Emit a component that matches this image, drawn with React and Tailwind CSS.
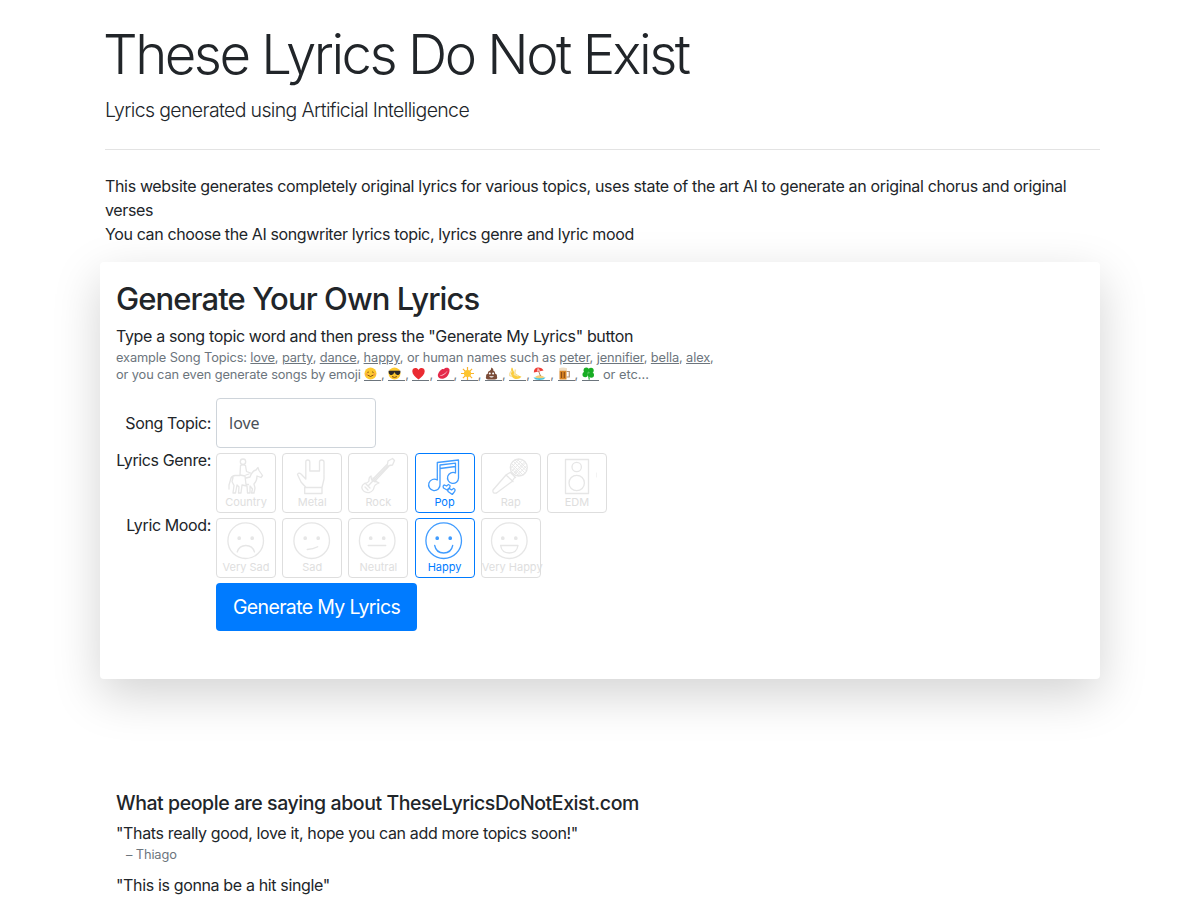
import React from 'react';
import { clsx } from 'clsx';

const EMOJIS = [
  {
    name: 'smile',
    art: (
      <>
        <circle cx="6.5" cy="6.5" r="6" fill="#fdc92f" />
        <path d="M3.3 5.5q.8-1.3 1.6 0M8 5.5q.8-1.3 1.6 0M3.5 8q3 3 6 0" fill="none" stroke="#7a4510" strokeWidth=".9" />
        <circle cx="2.6" cy="7.4" r="1.1" fill="#f79a4b" />
        <circle cx="10.4" cy="7.4" r="1.1" fill="#f79a4b" />
      </>
    ),
  },
  {
    name: 'cool',
    art: (
      <>
        <circle cx="6.5" cy="6.5" r="6" fill="#fdc92f" />
        <path d="M.6 3.8h11.8v1.4q-.5 2.8-3 2.8-2 0-2.6-2.4h-.6Q5.6 8 3.6 8 1.1 8 .6 5.2z" fill="#2c2a28" />
        <path d="M4 9.6q2.5 1.6 5 0" fill="none" stroke="#7a4510" />
      </>
    ),
  },
  {
    name: 'heart',
    art: <path d="M6.5 12.5C3 10 .3 7.4.3 4.3.3.5 5 .1 6.5 3 8 .1 12.7.5 12.7 4.3c0 3.1-2.7 5.7-6.2 8.2z" fill="#ea2b32" />,
  },
  {
    name: 'kiss',
    art: (
      <>
        <path d="M.8 8C2 4 5 1.4 6.8 2.3 8.6.2 11.8.5 12.5 2.6c.4 4.5-3 9-7 9.2C2.5 12 .8 10.3.8 8z" fill="#e52a4b" />
        <path d="M2.8 8.8C5 8.4 8.4 6 10.5 3.8 9.5 6.6 5.2 9.8 2.8 8.8z" fill="#fff" opacity=".7" />
      </>
    ),
  },
  {
    name: 'sun',
    art: (
      <>
        <path d="M6.5 0v13M0 6.5h13M1.9 1.9l9.2 9.2M11.1 1.9l-9.2 9.2" stroke="#fbb32c" strokeWidth="1.2" />
        <circle cx="6.5" cy="6.5" r="3.6" fill="#fdc52f" />
      </>
    ),
  },
  {
    name: 'poop',
    art: (
      <>
        <path d="M6 .5q3 1 2.3 3.2 2.2.6 1.7 2.9 2.5.6 1.9 2.9 1.2 2.8-2 3H3.1Q0 12 1.2 9.3.6 7 3 6.5 2.5 4.3 4.8 3.8 6.6 2.5 6 .5z" fill="#7b4c38" />
        <circle cx="4.8" cy="6.6" r="1" fill="#fff" />
        <circle cx="8.1" cy="6.6" r="1" fill="#fff" />
        <path d="M4 9.2h5q-2.5 2.4-5 0z" fill="#fff" />
      </>
    ),
  },
  {
    name: 'banana',
    art: (
      <>
        <path d="M3.5.8q1 6.7 9 9-3 3.4-7.5 1.7Q.5 9 2.5.8z" fill="#fbcd3e" />
        <path d="M3 4Q.5 5.5.5 8.5L3 9.5M6.5 2.5l-1 5 4 1.5" fill="none" stroke="#f7e2a5" strokeWidth="1.5" />
      </>
    ),
  },
  {
    name: 'beach',
    art: (
      <>
        <path d="M.5 10.5h12q-1.5 2.5-6 2.5t-6-2.5z" fill="#45c5e5" />
        <path d="M2 10q4-3.5 9.5 0l-2 1.2H4z" fill="#f5cf75" />
        <path d="M5 2.5 7.5 9" stroke="#9a693a" strokeWidth=".8" />
        <path d="M.8 5.5Q1 1.2 4.5.5q4.5-.3 6 3z" fill="#ef3e36" />
        <path d="M3.8 4.5 4.8.6l2.5 3.2z" fill="#fff" opacity=".6" />
      </>
    ),
  },
  {
    name: 'beer',
    art: (
      <>
        <path d="M1.5 2h7v10.5h-7z" fill="#d98523" />
        <path d="M3.5 5v6M6.3 5v6" stroke="#8a4c18" strokeWidth="1.1" />
        <path d="M8.5 4.5h2.8V10H8.5" fill="none" stroke="#b5957a" strokeWidth="1.2" />
        <path d="M1 1.2Q5 0 9 1.2v2.5H1z" fill="#f1dfc6" />
      </>
    ),
  },
  {
    name: 'clover',
    art: (
      <g fill="#18ad24">
        <circle cx="4.3" cy="3.2" r="2.7" />
        <circle cx="9" cy="3.4" r="2.7" />
        <circle cx="3.2" cy="7.5" r="2.7" />
        <circle cx="9.3" cy="8" r="2.7" />
        <path d="m6 5 1.3 7.7" stroke="#18ad24" strokeWidth="1.2" />
      </g>
    ),
  },
];

const GENRES = [
  {
    label: 'Country',
    icon: (
      <>
        <circle cx="27" cy="8.7" r="2.7" />
        <path d="M24.5 12.5q2.5-1.5 5 0l1 6 4 1.5M24.5 12.5l-.5 9.5 5 1 1 8.5h2.5M30 22l3-1" />
        <path d="M24 22.5h-5q-4 .5-4.5 4.5l-1.5 5v4M17 24.5l-1 4 2 4-1 7.5h2.5l1.5-8 2 2-.5 6H25l1-8 5 1 .5 7H34v-7l2.5 3-1 4H38l1-5-1-4q3-3 3-8l4 1.5 1.5-2-3.5-5-1-3-2 2.500q-4 1-6 7l-4 1" />
      </>
    ),
  },
  {
    label: 'Metal',
    icon: (
      <path d="M22.7 34.5H40v6H22.700zM24 34.5l-5-5.5-3.5-7.5q1-2.5 3.5-.5l4.8 5V9q0-2 2-2t2 2v9h9.700V9q0-2 2.200-2t2.300 2v17L40 34.500" />
    ),
  },
  {
    label: 'Rock',
    icon: (
      <>
        <path d="M24 27 39.500 11l.5-3 4.500-2.500 2 2-2 4.500-3 .5L26.500 28.500" />
        <path d="M24 27q-1-1-1-4-2.500 1-2 5-1 2-4.500 2.500-4 2.500-2 6t7 3q4-1.500 4.500-5 .5-3 5-4.500-2-1.500-4.500-1.500z" />
        <path d="m18 31 4 4M17 34l3 3M20.500 32.500 40 12.500M25 25l3 3" />
      </>
    ),
  },
  {
    label: 'Pop',
    icon: (
      <>
        <path d="M22.300 27V9.500L43.500 7v18a5.500 5.500 0 1 1-3-5v-6.500l-15.500 2v15.800a5.700 5.700 0 1 1-2.700-4.300zM25 15.500v-3.500l15.500-1.800v3.300" />
        <path d="M32 37 28.500 35q-1-2.700 1-3l2 1 2-1.500q2.500.8 1 3.200zM37.300 41.500l-4.300-3q-.5-3 1.700-2.800l1.800 1.200 2-1.500q2.500.8 1 3.200z" />
      </>
    ),
  },
  {
    label: 'Rap',
    icon: (
      <>
        <circle cx="37.800" cy="14.500" r="8.500" />
        <path d="m30 19-5 3L12 37q-.7 4 3.500 3L31 28.500l3-4.500M25 22l7 6.500M29.500 19.500l5 5" />
        <path
          strokeWidth=".9"
          d="m30.500 13 9.500 9.500M31 11l11 11M32.500 8.500l11 11M34 7l11 10.500M37 7l8.500 8.500M30.500 16l7 6.500M31 18 41 7.500M33 20 43.500 9M34 21l10-10.500M36 22.500l9.500-9.500M30.500 14.500l7-8"
        />
      </>
    ),
  },
  {
    label: 'EDM',
    icon: (
      <>
        <path d="M18.500 6.500h23v34h-23z" />
        <circle cx="29.700" cy="14" r="4.700" />
        <circle cx="29.700" cy="30" r="7.700" />
        <path strokeWidth=".5" d="M49.500 20v4" />
      </>
    ),
  },
];

const MOODS = [
  { label: 'Very Sad', cx: 29.7, mouth: 'M-8.5 11.300q2-6.500 8.700-6.500T8.800 11.300' },
  { label: 'Sad', cx: 29.7, mouth: 'M-4.500 8.800q6-.2 10.500-2.700' },
  { label: 'Neutral', cx: 29.2, mouth: 'M-9 4.800H8.500' },
  { label: 'Happy', cx: 28.7, mouth: 'M-9 4.800q1.500 7.500 9 7.500t9-7.500' },
  { label: 'Very Happy', cx: 28.3, mouth: 'M-8.700 4.800H8.700Q7.500 12.300 0 12.300T-8.700 4.800z' },
].map(({ label, cx, mouth }) => ({
  label,
  icon: (
    <g transform={`translate(${cx} 22.7)`}>
      <circle r="17.800" />
      <circle cx="-6.500" cy="-2.500" r="1.200" fill="currentColor" />
      <circle cx="6.500" cy="-2.500" r="1.200" fill="currentColor" />
      <path d={mouth} />
    </g>
  ),
}));

const Choice = ({ label, icon, active }) => (
  <button
    type="button"
    className={clsx(
      'flex h-[60px] w-[60px] shrink-0 flex-col rounded border',
      active ? 'border-[#007bff] text-[#007bff]' : 'border-[#dedede] text-[#dedede]'
    )}
  >
    <svg
      viewBox="1 1 58 41"
      className="h-[41px] w-[58px] shrink-0 opacity-75"
      fill="none"
      stroke="currentColor"
      strokeWidth="1.3"
      strokeLinejoin="round"
      strokeLinecap="round"
    >
      {icon}
    </svg>
    <span className="min-w-full self-start text-center text-[11px] leading-[14px] whitespace-nowrap">{label}</span>
  </button>
);

const ChoiceRow = ({ label, options, selected }) => (
  <div className="flex h-[65px]">
    <div className="w-[95px] shrink-0 text-right tracking-[-0.37px] whitespace-nowrap">{label}</div>
    <div className="ml-[5px] flex gap-[6.2px] pt-[5px]">
      {options.map((option) => (
        <Choice key={option.label} {...option} active={option.label === selected} />
      ))}
    </div>
  </div>
);

const Topic = ({ children }) => <a className="underline">{children}</a>;

export default function App() {
  return (
    <div className="h-[900px] overflow-hidden bg-white font-['Inter',sans-serif] text-base leading-6 text-[#212529]">
      <header className="ml-[105px] w-[995px] pt-[21px]">
        <h1 className="-ml-[2px] text-[54.5px] leading-[67px] font-light tracking-[-2.5px] whitespace-nowrap">These Lyrics Do Not Exist</h1>
        <p className="mt-[7px] text-[19.5px] leading-[30px] font-light tracking-[-0.64px]">Lyrics generated using Artificial Intelligence</p>
        <hr className="mt-6 mb-6 border-t border-[#e3e3e3]" />
        <p className="tracking-[-0.34px]">
          This website generates completely original lyrics for various topics, uses state of the art AI to generate an original chorus and original
          <br />
          verses
          <br />
          <span className="tracking-[-0.38px]">You can choose the AI songwriter lyrics topic, lyrics genre and lyric mood</span>
        </p>
      </header>

      <section className="mt-4 ml-[100px] h-[417px] w-[1000px] rounded bg-white px-4 pt-[18px] shadow-[0_16px_48px_rgba(0,0,0,0.175)]">
        <h2 className="text-[31px] leading-[38px] font-medium tracking-[-0.92px]">Generate Your Own Lyrics</h2>
        <p className="mt-[6px] tracking-[-0.355px]">Type a song topic word and then press the "Generate My Lyrics" button</p>
        <div className="mt-[1px] text-[12.8px] leading-[17px] tracking-[-0.11px] text-[#6c757d]">
          <p>
            example Song Topics: <Topic>love</Topic>, <Topic>party</Topic>, <Topic>dance</Topic>, <Topic>happy</Topic>, or human names such as{' '}
            <Topic>peter</Topic>, <Topic>jennifier</Topic>, <Topic>bella</Topic>, <Topic>alex</Topic>,
          </p>
          <div className="flex h-[17px]">
            <span className="w-[248px] shrink-0 whitespace-nowrap">or you can even generate songs by emoji</span>
            {EMOJIS.map(({ name, art }, i) => (
              <span key={name} className="flex w-[24.2px] shrink-0">
                <a className="h-[15px] w-[17px] border-b border-[#6c757d] pt-[1px]">
                  <svg viewBox="0 0 13 13" className="h-[13px] w-[13px]">{art}</svg>
                </a>
                {i < EMOJIS.length - 1 && ','}
              </span>
            ))}
            <span className="-ml-[3px] whitespace-nowrap tracking-normal">or etc...</span>
          </div>
        </div>

        <form className="mt-[15px]">
          <div className="flex h-[50px] items-center">
            <label className="w-[95px] text-right tracking-[-0.37px]">Song Topic:</label>
            <input
              defaultValue="love"
              className="ml-[5px] h-[50px] w-[160px] rounded border border-[#ced4da] px-3 font-['Noto_Sans',sans-serif] text-[#495057]"
            />
          </div>
          <ChoiceRow label="Lyrics Genre:" options={GENRES} selected="Pop" />
          <ChoiceRow label="Lyric Mood:" options={MOODS} selected="Happy" />
          <button
            type="button"
            className="mt-[5px] ml-[100px] h-12 w-[201px] rounded bg-[#007bff] text-[19.5px] tracking-[-0.65px] whitespace-nowrap text-white"
          >
            Generate My Lyrics
          </button>
        </form>
      </section>

      <section className="mt-[112px] ml-[116px]">
        <h3 className="text-[19.5px] leading-6 font-medium tracking-[-0.43px]">What people are saying about TheseLyricsDoNotExist.com</h3>
        <p className="mt-[6px] tracking-[-0.355px]">"Thats really good, love it, hope you can add more topics soon!"</p>
        <p className="ml-[10px] text-[12.8px] leading-[19px] tracking-[-0.11px] text-[#6c757d]">– Thiago</p>
        <p className="mt-[9px] tracking-[-0.355px]">"This is gonna be a hit single"</p>
      </section>
    </div>
  );
}
